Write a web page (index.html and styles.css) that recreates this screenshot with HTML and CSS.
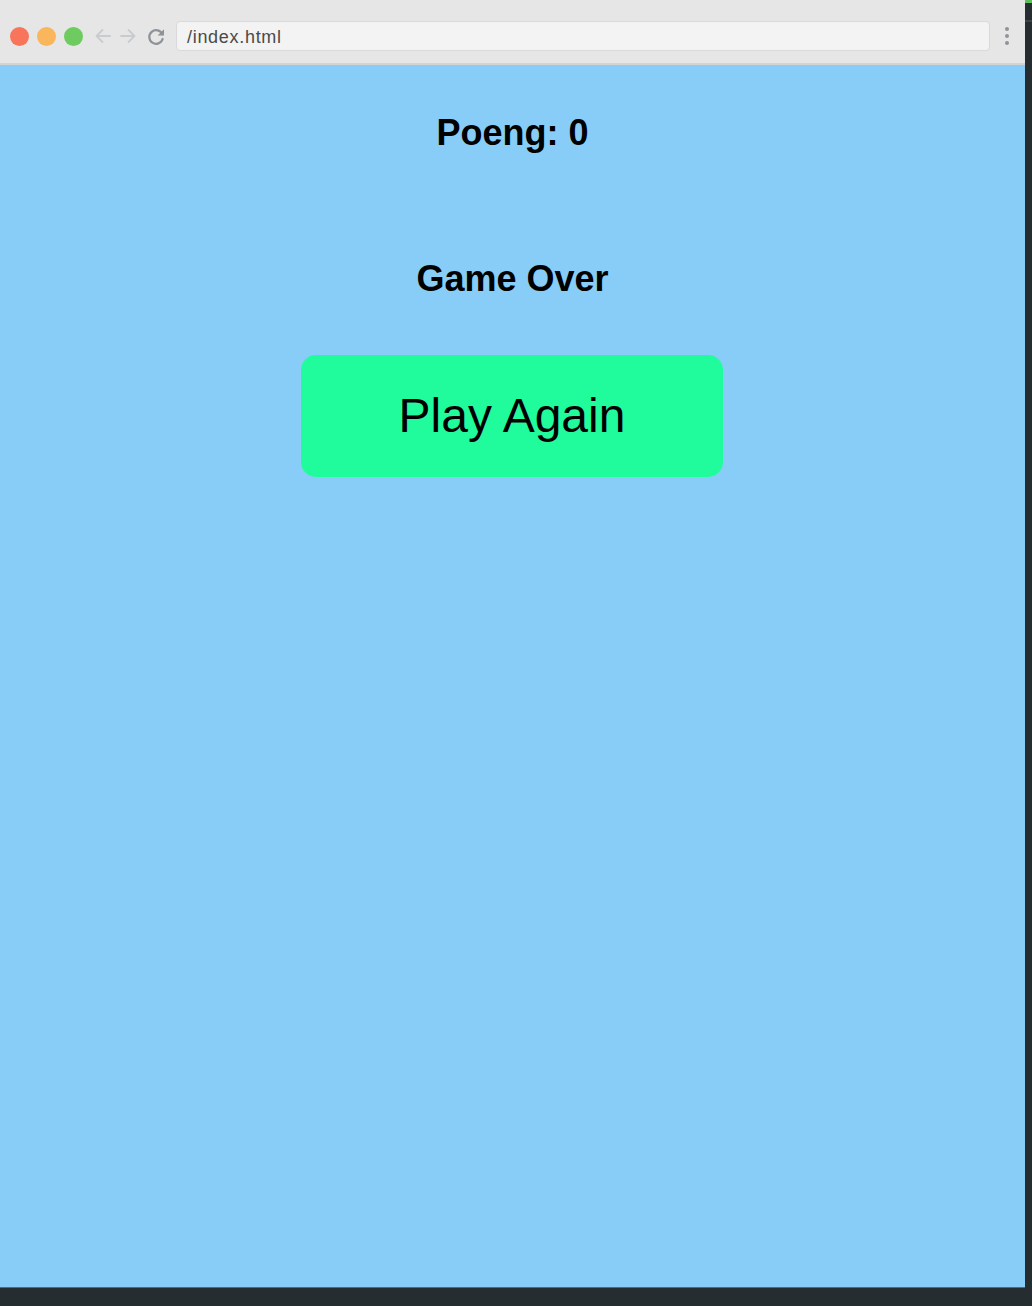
FILE: index.html
```html
<!DOCTYPE html>
<html lang="no">
<head>
<meta charset="utf-8">
<title>Poeng</title>
<link rel="stylesheet" href="styles.css">
</head>
<body>
<div class="screen">
  <div class="window">
    <div class="toolbar">
      <div class="lights">
        <span class="light red"></span>
        <span class="light yellow"></span>
        <span class="light green"></span>
      </div>
      <div class="navs">
        <svg class="nav" width="18" height="18" viewBox="0 0 18 18"><path d="M16 9H2.5M8.5 3L2.5 9l6 6" fill="none" stroke="#c9cccf" stroke-width="1.8" stroke-linecap="round" stroke-linejoin="round"/></svg>
        <svg class="nav" width="18" height="18" viewBox="0 0 18 18"><path d="M2 9h13.5M9.5 3l6 6-6 6" fill="none" stroke="#c9cccf" stroke-width="1.8" stroke-linecap="round" stroke-linejoin="round"/></svg>
        <svg class="nav reload" width="19" height="19" viewBox="0 0 19 19"><path d="M15.3 7.2A6.8 6.8 0 1 0 15.6 12" fill="none" stroke="#8d9398" stroke-width="2.2" stroke-linecap="round"/><path d="M17 2.2v6.4h-6.4z" fill="#8d9398"/></svg>
      </div>
      <div class="urlbar"><span class="url">/index.html</span></div>
      <div class="menu"><span class="dot"></span><span class="dot"></span><span class="dot"></span></div>
    </div>
    <main class="page">
      <h1 class="score">Poeng: 0</h1>
      <h2 class="status">Game Over</h2>
      <button class="again" type="button">Play Again</button>
    </main>
  </div>
  <div class="edge"><span class="edge-green"></span><span class="edge-line"></span></div>
</div>
<div class="bottom"></div>
</body>
</html>
```
FILE: styles.css
```css
html, body {
  margin: 0;
  padding: 0;
  background: #262d31;
}
body {
  width: 1032px;
  height: 1306px;
  overflow: hidden;
  font-family: "Liberation Sans", Arial, sans-serif;
}
.screen {
  display: flex;
  height: 1288px;
}
.window {
  width: 1025px;
  flex: none;
  display: flex;
  flex-direction: column;
}
.edge {
  width: 7px;
  flex: none;
  background: #262d31;
  display: flex;
  flex-direction: column;
}
.edge-green {
  height: 3px;
  background: #5fbf5a;
}
.edge-line {
  margin-top: 17px;
  height: 2px;
  background: #3a4347;
}
.toolbar {
  height: 63px;
  background: #e6e6e6;
  border-bottom: 2px solid #d3d3d3;
  display: flex;
  align-items: center;
}
.lights {
  display: flex;
  gap: 8px;
  margin-left: 10px;
  margin-top: 9px;
}
.light {
  width: 19px;
  height: 19px;
  border-radius: 50%;
  display: block;
}
.red { background: #f8745a; }
.yellow { background: #f9b65c; }
.green { background: #6dcb60; }
.navs {
  display: flex;
  align-items: center;
  margin-left: 11px;
  margin-top: 9px;
  gap: 7px;
}
.nav { display: block; }
.reload { margin-left: 3px; }
.urlbar {
  margin-left: 10px;
  margin-top: 9px;
  width: 812px;
  height: 28px;
  background: #f3f3f3;
  border: 1px solid #d9d9d9;
  border-radius: 4px;
  display: flex;
  align-items: center;
}
.url {
  margin-left: 10px;
  font-family: "Liberation Sans", Arial, sans-serif;
  font-size: 18px;
  letter-spacing: 0.7px;
  color: #4a4a4a;
  line-height: 20px;
  padding-top: 2px;
}
.menu {
  margin-left: 15px;
  margin-top: 9px;
  display: flex;
  flex-direction: column;
  gap: 3px;
}
.dot {
  width: 4px;
  height: 4px;
  border-radius: 50%;
  background: #8f9499;
  display: block;
}
.page {
  flex: 1;
  background: #88cdf7;
  border-bottom: 1px solid #4f6c7b;
  display: flex;
  flex-direction: column;
  align-items: center;
  padding-top: 47px;
}
.score, .status {
  margin: 0;
  font-size: 36px;
  line-height: 42px;
  font-weight: bold;
  color: #000;
}
.status {
  margin-top: 104px;
}
.again {
  margin-top: 55px;
  margin-right: 1px;
  width: 422px;
  height: 122px;
  border: none;
  border-radius: 15px;
  background: #20fb9c;
  font-family: "Liberation Sans", Arial, sans-serif;
  font-size: 48px;
  line-height: 48px;
  color: #000;
  padding: 0;
}
.bottom {
  height: 18px;
}
```
